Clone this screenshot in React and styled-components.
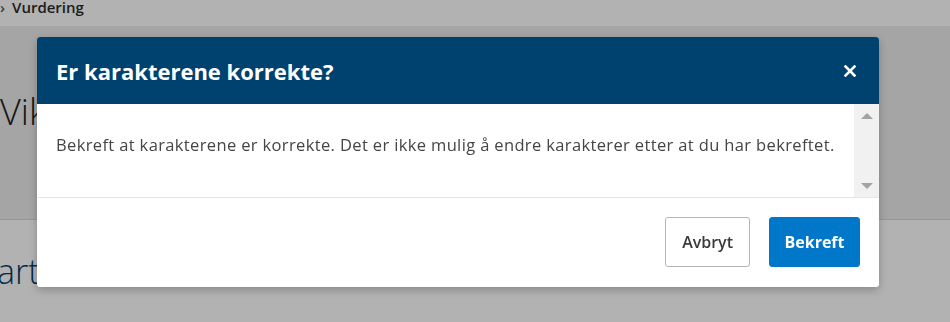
import styled, { createGlobalStyle } from "styled-components";

const GlobalStyle = createGlobalStyle`
  html, body {
    margin: 0;
    padding: 0;
    background: #ffffff;
    font-family: "Open Sans", "Liberation Sans", sans-serif;
    overflow: hidden;
  }
`;

//PAGE BEHIND
const Page = styled.div`
  width: 950px;
  height: 322px;
  display: flex;
  flex-direction: column;
`;

const Breadcrumb = styled.div`
  height: 26px;
  display: flex;
  align-items: flex-start;
  gap: 7px;
  font-size: 15px;
  font-weight: 600;
  color: #2a2a2a;
  line-height: 15px;
  box-sizing: border-box;
`;

const Crumb = styled.span`
  color: ${(p) => (p.muted ? "#555" : "#2a2a2a")};
`;

const HeaderBand = styled.div`
  height: 194px;
  background: #ececed;
  border-bottom: 1px solid #d8d8d8;
  display: flex;
  align-items: flex-start;
  box-sizing: border-box;
`;

const PageTitle = styled.h1`
  margin: 62px 0 0 0;
  font-size: 36px;
  line-height: 48px;
  font-weight: 300;
  color: #222;
`;

const SubTitle = styled.h2`
  margin: 29px 0 0 -3px;
  font-size: 34px;
  line-height: 44px;
  font-weight: 300;
  color: #00406e;
`;

//MODAL
const Overlay = styled.div`
  position: fixed;
  inset: 0;
  background: rgba(0, 0, 0, 0.3);
`;

const Dialog = styled.div`
  position: absolute;
  left: 37px;
  top: 37px;
  width: 842px;
  background: #fff;
  border-radius: 3px;
  box-shadow: 0 3px 10px rgba(0, 0, 0, 0.25);
  overflow: hidden;
  display: flex;
  flex-direction: column;
`;

const DialogHeader = styled.div`
  height: 67px;
  background: #00426f;
  display: flex;
  align-items: center;
  justify-content: space-between;
  padding: 0 22px 0 19px;
`;

const DialogTitle = styled.h3`
  margin: 0;
  color: #fff;
  font-size: 22px;
  font-weight: 700;
`;

const CloseButton = styled.button`
  border: none;
  background: none;
  padding: 0;
  width: 14px;
  height: 14px;
  display: flex;
  align-items: center;
  justify-content: center;
  cursor: pointer;
`;

const BodyRow = styled.div`
  height: 93px;
  display: flex;
  border-bottom: 1px solid #e6e6e6;
`;

const BodyText = styled.p`
  flex: 1;
  margin: 0;
  padding: 30px 19px 0;
  font-size: 16.5px;
  letter-spacing: 0.36px;
  line-height: 22px;
  color: #454545;
`;

const ScrollTrack = styled.div`
  width: 25px;
  background: #f1f1f1;
  display: flex;
  flex-direction: column;
  align-items: center;
  justify-content: space-between;
  padding: 9px 0 8px;
  box-sizing: border-box;
`;

const Arrow = styled.div`
  width: 0;
  height: 0;
  border-left: 6px solid transparent;
  border-right: 6px solid transparent;
  ${(p) =>
    p.down
      ? "border-top: 6px solid #a3a3a3;"
      : "border-bottom: 6px solid #a3a3a3;"}
`;

const Footer = styled.div`
  height: 89px;
  display: flex;
  align-items: flex-start;
  justify-content: flex-end;
  gap: 19px;
  padding: 19px 19px 0;
  box-sizing: border-box;
`;

const Button = styled.button`
  height: 50px;
  padding: 0 ${(p) => (p.primary ? "14.5px" : "16px")};
  border-radius: 3px;
  font-family: "Open Sans", "Liberation Sans", sans-serif;
  font-size: 16px;
  font-weight: ${(p) => (p.primary ? 700 : 600)};
  color: ${(p) => (p.primary ? "#fff" : "#3a3a3a")};
  background: ${(p) => (p.primary ? "#0077c8" : "#fff")};
  border: 1px solid ${(p) => (p.primary ? "#0077c8" : "#b5b5b5")};
  cursor: pointer;
`;

const CloseIcon = () => (
  <svg width="12" height="12" viewBox="0 0 12 12">
    <path
      d="M1.5 1.5 L10.5 10.5 M10.5 1.5 L1.5 10.5"
      stroke="#fff"
      strokeWidth="2.6"
      strokeLinecap="square"
    />
  </svg>
);

const App = () => {
  return (
    <>
      <GlobalStyle />
      <Page>
        <Breadcrumb>
          <Crumb muted>›</Crumb>
          <Crumb>Vurdering</Crumb>
        </Breadcrumb>
        <HeaderBand>
          <PageTitle>Vikarkarakterer</PageTitle>
        </HeaderBand>
        <SubTitle>art</SubTitle>
      </Page>

      <Overlay>
        <Dialog>
          <DialogHeader>
            <DialogTitle>Er karakterene korrekte?</DialogTitle>
            <CloseButton aria-label="Lukk">
              <CloseIcon />
            </CloseButton>
          </DialogHeader>
          <BodyRow>
            <BodyText>
              Bekreft at karakterene er korrekte. Det er ikke mulig å endre
              karakterer etter at du har bekreftet.
            </BodyText>
            <ScrollTrack>
              <Arrow />
              <Arrow down />
            </ScrollTrack>
          </BodyRow>
          <Footer>
            <Button>Avbryt</Button>
            <Button primary>Bekreft</Button>
          </Footer>
        </Dialog>
      </Overlay>
    </>
  );
};

export default App;
